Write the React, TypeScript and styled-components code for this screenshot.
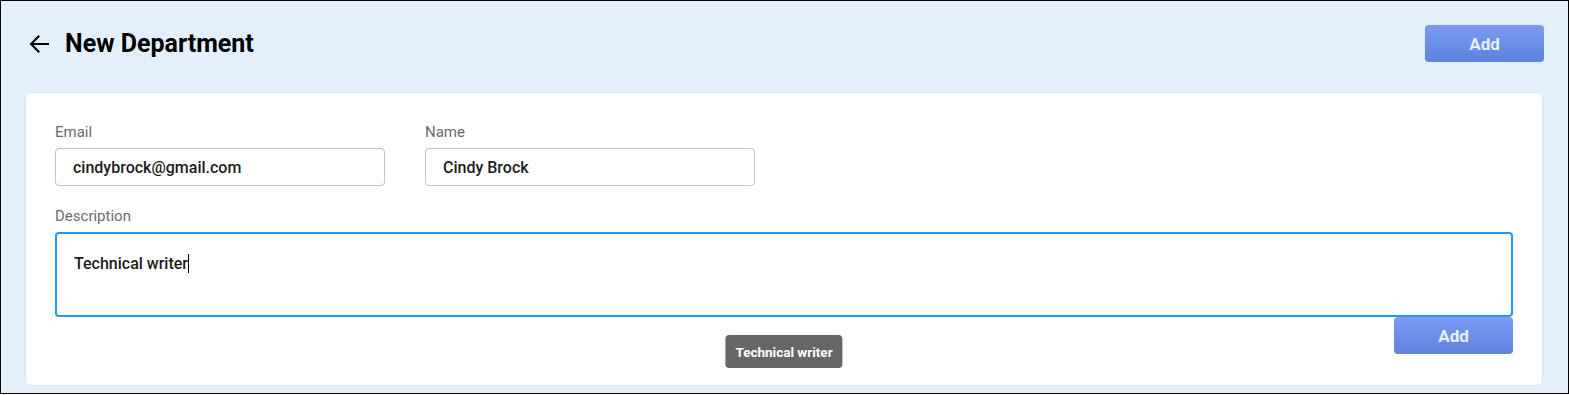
import React from 'react';
import styled, { createGlobalStyle } from 'styled-components';

const Global = createGlobalStyle`
  html, body {
    margin: 0;
    padding: 0;
    background: #ffffff;
  }
  * {
    box-sizing: border-box;
  }
`;

const S = {
  Page: styled.div`
    height: 394px;
    border: 1px solid #000000;
    background: #e3f0fc;
    font-family: Roboto, 'Noto Sans', sans-serif;
    display: flex;
    flex-direction: column;
    padding: 0 25px 7px 24px;
  `,

  Header: styled.div`
    height: 91px;
    display: flex;
    align-items: center;
    justify-content: space-between;
    padding-bottom: 6px;
  `,

  TitleGroup: styled.div`
    display: flex;
    align-items: center;
  `,

  Back: styled.button`
    border: none;
    background: transparent;
    padding: 0;
    margin: 0 14px 0 2px;
    display: flex;
    align-items: center;
    cursor: pointer;
  `,

  Title: styled.h1`
    margin: 0;
    font-size: 25px;
    font-weight: 700;
    color: #000000;
  `,

  Button: styled.button<{ $offset?: number }>`
    width: 119px;
    height: 37px;
    border: none;
    border-radius: 4px;
    background: linear-gradient(180deg, #7b9bf1 0%, #5e82df 100%);
    color: #e9f1ff;
    font-family: Roboto, sans-serif;
    font-size: 17px;
    font-weight: 700;
    margin-right: ${(p) => p.$offset ?? 0}px;
    cursor: pointer;
  `,

  Card: styled.div`
    position: relative;
    flex: 1;
    background: #ffffff;
    border: 1px solid #d3e6f8;
    border-radius: 5px;
    padding: 29px 29px 30px 29px;
    display: flex;
    flex-direction: column;
  `,

  Row: styled.div`
    display: flex;
    gap: 40px;
  `,

  Field: styled.div`
    display: flex;
    flex-direction: column;
  `,

  Label: styled.label`
    font-size: 15px;
    line-height: 20px;
    color: #6b6b6b;
    margin-bottom: 6px;
  `,

  Input: styled.div`
    width: 330px;
    height: 38px;
    border: 1px solid #c4c4c4;
    border-radius: 4px;
    padding: 0 17px;
    display: flex;
    align-items: center;
    font-size: 16px;
    font-weight: 500;
    color: #1c1c1c;
  `,

  Description: styled.div`
    margin-top: 20px;
    display: flex;
    flex-direction: column;
  `,

  TextArea: styled.div`
    height: 85px;
    border: 2px solid #2196f3;
    border-radius: 4px;
    padding: 19px 17px;
    font-size: 16px;
    font-weight: 500;
    line-height: 22px;
    color: #1c1c1c;
  `,

  Caret: styled.span`
    display: inline-block;
    width: 1px;
    height: 19px;
    background: #000000;
    vertical-align: -4px;
  `,

  Actions: styled.div`
    display: flex;
    justify-content: flex-end;
  `,

  Tooltip: styled.div`
    position: absolute;
    top: 242px;
    left: 50%;
    transform: translateX(-50%);
    height: 33px;
    padding: 0 10px;
    border-radius: 4px;
    background: #666666;
    color: #ffffff;
    font-size: 13.5px;
    font-weight: 700;
    display: flex;
    align-items: center;
    white-space: nowrap;
  `,
};

const ArrowLeft = () => (
  <svg width="24" height="24" viewBox="0 0 24 24" fill="none" stroke="#000" strokeWidth="2" strokeLinecap="square">
    <path d="M21 12H4" />
    <path d="M11.5 4.5L4 12l7.5 7.5" />
  </svg>
);

const App: React.FC = () => {
  return (
    <>
      <Global />
      <S.Page>
        <S.Header>
          <S.TitleGroup>
            <S.Back aria-label="Back">
              <ArrowLeft />
            </S.Back>
            <S.Title>New Department</S.Title>
          </S.TitleGroup>
          <S.Button $offset={-1}>Add</S.Button>
        </S.Header>
        <S.Card>
          <S.Row>
            <S.Field>
              <S.Label>Email</S.Label>
              <S.Input>cindybrock@gmail.com</S.Input>
            </S.Field>
            <S.Field>
              <S.Label>Name</S.Label>
              <S.Input>Cindy Brock</S.Input>
            </S.Field>
          </S.Row>
          <S.Description>
            <S.Label>Description</S.Label>
            <S.TextArea>
              Technical writer
              <S.Caret />
            </S.TextArea>
          </S.Description>
          <S.Actions>
            <S.Button>Add</S.Button>
          </S.Actions>
          <S.Tooltip>Technical writer</S.Tooltip>
        </S.Card>
      </S.Page>
    </>
  );
};

export default App;
